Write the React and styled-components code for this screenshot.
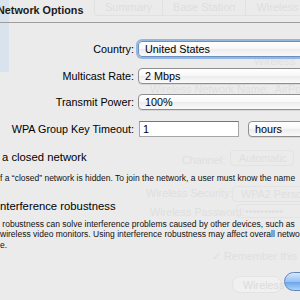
import styled, { createGlobalStyle } from "styled-components";

const GlobalStyle = createGlobalStyle`
  html, body {
    margin: 0;
    padding: 0;
    background: #ebebeb;
  }
  * {
    box-sizing: border-box;
  }
`;

const App = () => {
  return (
    <Screen>
      <GlobalStyle />
      <Backdrop>
        <SideStripe />
        <GhostTabs>
          <GhostTab>Summary</GhostTab>
          <GhostTab>Base Station</GhostTab>
          <GhostTab>Wireless</GhostTab>
        </GhostTabs>
        <GhostText $x={254} $y={55}>Wireless</GhostText>
        <GhostText $x={150} $y={83}>Wireless Network Name:&nbsp;&nbsp;AirPort</GhostText>
        <GhostText $x={182} $y={154}>Channel:</GhostText>
        <GhostBox $x={230} $y={150} $w={64}>Automatic</GhostBox>
        <GhostText $x={146} $y={187}>Wireless Security:</GhostText>
        <GhostBox $x={232} $y={186} $w={80}>WPA2 Personal</GhostBox>
        <GhostText $x={150} $y={206}>Wireless Password:</GhostText>
        <GhostBox $x={236} $y={204} $w={80} $small>••••••••••</GhostBox>
        <GhostText $x={212} $y={250}>✓ Remember this</GhostText>
        <GhostButton $x={232} $y={276}>Wireless</GhostButton>
        <BlueButton />
      </Backdrop>

      <Sheet>
        <TitleBar>
          <Title>Network Options</Title>
        </TitleBar>

        <Form>
          <Row>
            <Label>Country:</Label>
            <Popup $focused>United States</Popup>
          </Row>
          <Row>
            <Label>Multicast Rate:</Label>
            <Popup>2 Mbps</Popup>
          </Row>
          <Row>
            <Label>Transmit Power:</Label>
            <Popup>100%</Popup>
          </Row>
          <Row>
            <Label>WPA Group Key Timeout:</Label>
            <Controls>
              <TextField>1</TextField>
              <Popup $width={60}>hours</Popup>
            </Controls>
          </Row>
        </Form>

        <Option>
          <OptionTitle>a closed network</OptionTitle>
          <OptionNote>
            <Line>f a “closed” network is hidden. To join the network, a user must know the name</Line>
          </OptionNote>
        </Option>

        <Option $second>
          <OptionTitle $second>nterference robustness</OptionTitle>
          <OptionNote $second>
            <Line>&nbsp;robustness can solve interference problems caused by other devices, such as</Line>
            <Line>wireless video monitors. Using interference robustness may affect overall network</Line>
            <Line>e.</Line>
          </OptionNote>
        </Option>
      </Sheet>
    </Screen>
  );
};

export default App;

const Screen = styled.div`
  position: relative;
  width: 300px;
  height: 300px;
  overflow: hidden;
  background: #ebebeb;
  font-family: "Liberation Sans", Arial, sans-serif;
  color: #000;
`;

const Backdrop = styled.div`
  position: absolute;
  inset: 0;
  z-index: 0;
`;

const SideStripe = styled.div`
  position: absolute;
  left: 0;
  top: 0;
  width: 9px;
  height: 72px;
  background: #d8e3ee;
`;

const GhostTabs = styled.div`
  position: absolute;
  left: 94px;
  top: -4px;
  display: flex;
  border: 1px solid #e1e1e1;
  border-radius: 4px;
`;

const GhostTab = styled.div`
  padding: 0 10px;
  height: 18px;
  line-height: 20px;
  font-size: 11px;
  color: #dedede;
  white-space: nowrap;
  border-left: 1px solid #e1e1e1;
  &:first-child {
    border-left: none;
  }
`;

const GhostText = styled.div`
  position: absolute;
  left: ${(p) => p.$x}px;
  top: ${(p) => p.$y}px;
  font-size: 10.8px;
  line-height: 12px;
  color: #dfdfdf;
  white-space: nowrap;
`;

const GhostBox = styled.div`
  position: absolute;
  left: ${(p) => p.$x}px;
  top: ${(p) => p.$y}px;
  width: ${(p) => p.$w}px;
  height: ${(p) => (p.$small ? "14px" : "16px")};
  padding-left: 8px;
  font-size: 10.8px;
  line-height: ${(p) => (p.$small ? "12px" : "14px")};
  color: #dfdfdf;
  border: 1px solid #e3e3e3;
  border-radius: 4px;
  white-space: nowrap;
`;

const GhostButton = styled.div`
  position: absolute;
  left: ${(p) => p.$x}px;
  top: ${(p) => p.$y}px;
  width: 50px;
  height: 17px;
  padding-left: 10px;
  font-size: 10.8px;
  line-height: 16px;
  color: #dbdbdb;
  border: 1px solid #e3e3e3;
  border-radius: 8px;
  background: #f0f0f0;
`;

const BlueButton = styled.div`
  position: absolute;
  left: 284px;
  top: 272px;
  width: 40px;
  height: 19px;
  border-radius: 10px;
  border: 1px solid #6386bb;
  background: linear-gradient(#d6e8fb 0%, #97c2f1 50%, #6aa6ea 55%, #acd3f8 100%);
`;

const Sheet = styled.div`
  position: relative;
  z-index: 1;
  display: flex;
  flex-direction: column;
`;

const TitleBar = styled.div`
  height: 23px;
  border-bottom: 1px solid #9d9d9d;
`;

const Title = styled.div`
  margin-left: -3px;
  font-size: 10.8px;
  font-weight: 700;
  line-height: 21px;
  color: #1a1a1a;
  white-space: nowrap;
`;

const Form = styled.div`
  display: flex;
  flex-direction: column;
  gap: 10.5px;
  padding-top: 18px;
`;

const Row = styled.div`
  display: grid;
  grid-template-columns: 134px 1fr;
  column-gap: 4px;
  align-items: center;
  height: 16px;
`;

const Label = styled.div`
  text-align: right;
  font-size: 10.8px;
  line-height: 16px;
  white-space: nowrap;
`;

const Controls = styled.div`
  display: flex;
  align-items: center;
  gap: 9px;
  padding-left: 1px;
`;

const Popup = styled.div`
  flex: none;
  width: ${(p) => (p.$width ? `${p.$width}px` : "170px")};
  height: 16px;
  padding-left: 6px;
  font-size: 10.8px;
  line-height: 14px;
  white-space: nowrap;
  border: 1px solid ${(p) => (p.$focused ? "#6a8fc2" : "#8f8f8f")};
  border-radius: 4px;
  background: linear-gradient(#ffffff 0%, #f7f7f7 50%, #ececec 52%, #fafafa 100%);
  box-shadow: ${(p) =>
    p.$focused
      ? "0 0 0 2px rgba(120, 164, 218, 0.75)"
      : "0 1px 0 rgba(0, 0, 0, 0.08)"};
`;

const TextField = styled.div`
  flex: none;
  width: 100px;
  height: 16px;
  padding-left: 3px;
  font-size: 10.8px;
  line-height: 14px;
  background: #fff;
  border: 1px solid #a5a5a5;
  border-top-color: #767676;
`;

const Option = styled.div`
  margin-top: ${(p) => (p.$second ? "15px" : "13.5px")};
`;

const OptionTitle = styled.div`
  margin-left: ${(p) => (p.$second ? "0" : "2px")};
  font-size: 11.3px;
  line-height: 14px;
  white-space: nowrap;
`;

const OptionNote = styled.div`
  margin-top: ${(p) => (p.$second ? "6px" : "9px")};
  font-size: 8.5px;
  line-height: 10.6px;
  color: #111;
`;

const Line = styled.div`
  white-space: nowrap;
`;
